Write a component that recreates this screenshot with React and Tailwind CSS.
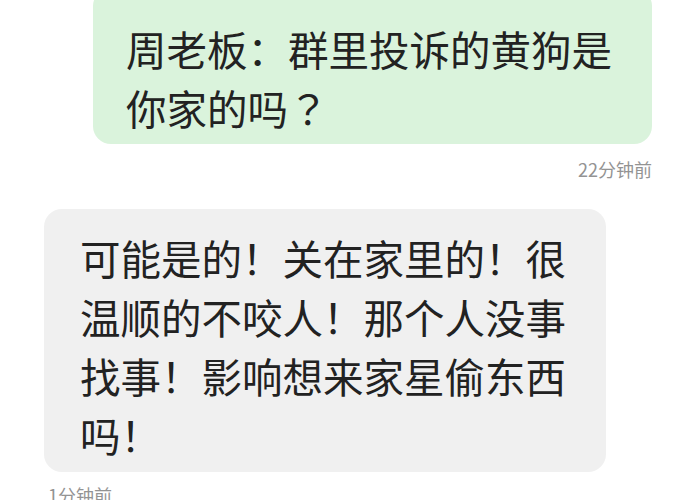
export default function App() {
  return (
    <div
      lang="zh-CN"
      className="w-[700px] h-[500px] overflow-hidden bg-white text-[#222222] [text-spacing-trim:space-all]"
      style={{ fontFamily: '"Noto Sans CJK SC", "Noto Sans", sans-serif' }}
    >
      <div className="flex flex-col items-end pr-[48px]">
        <div className="mt-[-12px] w-[559px] rounded-[18px] bg-[#daf3dc] pt-[31px] pb-[7px] pl-[33px] pr-[30px] text-[40.5px] leading-[59px]">
          周老板：群里投诉的黄狗是你家的吗
          <span
            lang="zh-TW"
            style={{ fontFamily: '"Noto Sans CJK TC", "Noto Sans CJK SC", sans-serif' }}
          >
            ？
          </span>
        </div>
        <div className="mt-[13px] text-[18px] leading-[24px] text-[#939393]">
          22分钟前
        </div>
      </div>

      <div className="mt-[28px] ml-[44px] w-[562px] rounded-[18px] bg-[#f0f0f0] pt-[19px] pb-[8px] pl-[36px] pr-[30px] text-[40.5px] leading-[59px]">
        可能是的！关在家里的！很温顺的不咬人！那个人没事找事！影响想来家星偷东西吗！
      </div>
      <div className="mt-[11px] ml-[48px] text-[18px] leading-[24px] text-[#939393]">
        1分钟前
      </div>
    </div>
  );
}
